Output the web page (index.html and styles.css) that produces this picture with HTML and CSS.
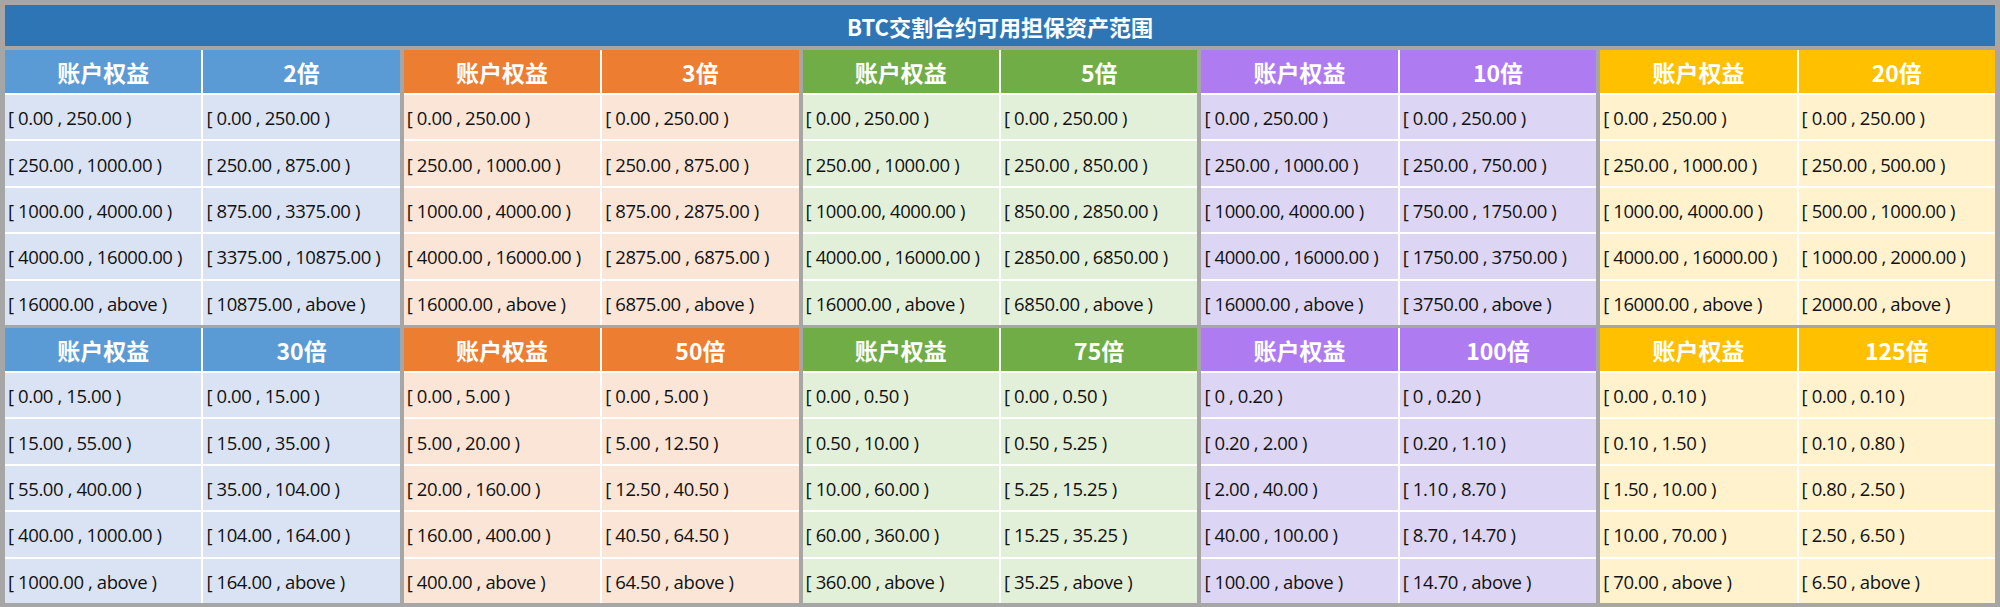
FILE: index.html
```html
<!DOCTYPE html>
<html lang="zh-CN">
<head>
<meta charset="utf-8">
<title>BTC交割合约可用担保资产范围</title>
<link rel="stylesheet" href="styles.css">
</head>
<body>
<div class="sheet">
  <div class="title">BTC交割合约可用担保资产范围</div>
  <div class="band">
    <div class="group blue">
      <div class="hd">账户权益</div><div class="hd">2倍</div>
      <div class="cell">[ 0.00 , 250.00 )</div><div class="cell">[ 0.00 , 250.00 )</div>
      <div class="cell">[ 250.00 , 1000.00 )</div><div class="cell">[ 250.00 , 875.00 )</div>
      <div class="cell">[ 1000.00 , 4000.00 )</div><div class="cell">[ 875.00 , 3375.00 )</div>
      <div class="cell">[ 4000.00 , 16000.00 )</div><div class="cell">[ 3375.00 , 10875.00 )</div>
      <div class="cell">[ 16000.00 , above )</div><div class="cell">[ 10875.00 , above )</div>
    </div>
    <div class="group orange">
      <div class="hd">账户权益</div><div class="hd">3倍</div>
      <div class="cell">[ 0.00 , 250.00 )</div><div class="cell">[ 0.00 , 250.00 )</div>
      <div class="cell">[ 250.00 , 1000.00 )</div><div class="cell">[ 250.00 , 875.00 )</div>
      <div class="cell">[ 1000.00 , 4000.00 )</div><div class="cell">[ 875.00 , 2875.00 )</div>
      <div class="cell">[ 4000.00 , 16000.00 )</div><div class="cell">[ 2875.00 , 6875.00 )</div>
      <div class="cell">[ 16000.00 , above )</div><div class="cell">[ 6875.00 , above )</div>
    </div>
    <div class="group green">
      <div class="hd">账户权益</div><div class="hd">5倍</div>
      <div class="cell">[ 0.00 , 250.00 )</div><div class="cell">[ 0.00 , 250.00 )</div>
      <div class="cell">[ 250.00 , 1000.00 )</div><div class="cell">[ 250.00 , 850.00 )</div>
      <div class="cell">[ 1000.00, 4000.00 )</div><div class="cell">[ 850.00 , 2850.00 )</div>
      <div class="cell">[ 4000.00 , 16000.00 )</div><div class="cell">[ 2850.00 , 6850.00 )</div>
      <div class="cell">[ 16000.00 , above )</div><div class="cell">[ 6850.00 , above )</div>
    </div>
    <div class="group purple">
      <div class="hd">账户权益</div><div class="hd">10倍</div>
      <div class="cell">[ 0.00 , 250.00 )</div><div class="cell">[ 0.00 , 250.00 )</div>
      <div class="cell">[ 250.00 , 1000.00 )</div><div class="cell">[ 250.00 , 750.00 )</div>
      <div class="cell">[ 1000.00, 4000.00 )</div><div class="cell">[ 750.00 , 1750.00 )</div>
      <div class="cell">[ 4000.00 , 16000.00 )</div><div class="cell">[ 1750.00 , 3750.00 )</div>
      <div class="cell">[ 16000.00 , above )</div><div class="cell">[ 3750.00 , above )</div>
    </div>
    <div class="group yellow">
      <div class="hd">账户权益</div><div class="hd">20倍</div>
      <div class="cell">[ 0.00 , 250.00 )</div><div class="cell">[ 0.00 , 250.00 )</div>
      <div class="cell">[ 250.00 , 1000.00 )</div><div class="cell">[ 250.00 , 500.00 )</div>
      <div class="cell">[ 1000.00, 4000.00 )</div><div class="cell">[ 500.00 , 1000.00 )</div>
      <div class="cell">[ 4000.00 , 16000.00 )</div><div class="cell">[ 1000.00 , 2000.00 )</div>
      <div class="cell">[ 16000.00 , above )</div><div class="cell">[ 2000.00 , above )</div>
    </div>
  </div>
  <div class="band band2">
    <div class="group blue">
      <div class="hd">账户权益</div><div class="hd">30倍</div>
      <div class="cell">[ 0.00 , 15.00 )</div><div class="cell">[ 0.00 , 15.00 )</div>
      <div class="cell">[ 15.00 , 55.00 )</div><div class="cell">[ 15.00 , 35.00 )</div>
      <div class="cell">[ 55.00 , 400.00 )</div><div class="cell">[ 35.00 , 104.00 )</div>
      <div class="cell">[ 400.00 , 1000.00 )</div><div class="cell">[ 104.00 , 164.00 )</div>
      <div class="cell">[ 1000.00 , above )</div><div class="cell">[ 164.00 , above )</div>
    </div>
    <div class="group orange">
      <div class="hd">账户权益</div><div class="hd">50倍</div>
      <div class="cell">[ 0.00 , 5.00 )</div><div class="cell">[ 0.00 , 5.00 )</div>
      <div class="cell">[ 5.00 , 20.00 )</div><div class="cell">[ 5.00 , 12.50 )</div>
      <div class="cell">[ 20.00 , 160.00 )</div><div class="cell">[ 12.50 , 40.50 )</div>
      <div class="cell">[ 160.00 , 400.00 )</div><div class="cell">[ 40.50 , 64.50 )</div>
      <div class="cell">[ 400.00 , above )</div><div class="cell">[ 64.50 , above )</div>
    </div>
    <div class="group green">
      <div class="hd">账户权益</div><div class="hd">75倍</div>
      <div class="cell">[ 0.00 , 0.50 )</div><div class="cell">[ 0.00 , 0.50 )</div>
      <div class="cell">[ 0.50 , 10.00 )</div><div class="cell">[ 0.50 , 5.25 )</div>
      <div class="cell">[ 10.00 , 60.00 )</div><div class="cell">[ 5.25 , 15.25 )</div>
      <div class="cell">[ 60.00 , 360.00 )</div><div class="cell">[ 15.25 , 35.25 )</div>
      <div class="cell">[ 360.00 , above )</div><div class="cell">[ 35.25 , above )</div>
    </div>
    <div class="group purple">
      <div class="hd">账户权益</div><div class="hd">100倍</div>
      <div class="cell">[ 0 , 0.20 )</div><div class="cell">[ 0 , 0.20 )</div>
      <div class="cell">[ 0.20 , 2.00 )</div><div class="cell">[ 0.20 , 1.10 )</div>
      <div class="cell">[ 2.00 , 40.00 )</div><div class="cell">[ 1.10 , 8.70 )</div>
      <div class="cell">[ 40.00 , 100.00 )</div><div class="cell">[ 8.70 , 14.70 )</div>
      <div class="cell">[ 100.00 , above )</div><div class="cell">[ 14.70 , above )</div>
    </div>
    <div class="group yellow">
      <div class="hd">账户权益</div><div class="hd">125倍</div>
      <div class="cell">[ 0.00 , 0.10 )</div><div class="cell">[ 0.00 , 0.10 )</div>
      <div class="cell">[ 0.10 , 1.50 )</div><div class="cell">[ 0.10 , 0.80 )</div>
      <div class="cell">[ 1.50 , 10.00 )</div><div class="cell">[ 0.80 , 2.50 )</div>
      <div class="cell">[ 10.00 , 70.00 )</div><div class="cell">[ 2.50 , 6.50 )</div>
      <div class="cell">[ 70.00 , above )</div><div class="cell">[ 6.50 , above )</div>
    </div>
  </div>
</div>
</body>
</html>
```

FILE: styles.css
```css
html, body {
  margin: 0;
  padding: 0;
  background: #a6a6a6;
}
.sheet {
  width: 2000px;
  height: 607px;
  box-sizing: border-box;
  padding: 5px 5px 4px 5px;
  display: flex;
  flex-direction: column;
  overflow: hidden;
}
.title {
  height: 41px;
  flex: none;
  background: #2e75b6;
  color: #fff;
  font-family: "Noto Sans CJK SC", sans-serif;
  font-weight: 700;
  font-size: 22px;
  display: flex;
  align-items: center;
  justify-content: center;
  margin-bottom: 4px;
}
.band {
  display: grid;
  grid-template-columns: repeat(5, minmax(0, 1fr));
  column-gap: 4px;
  height: 275px;
  flex: none;
}
.band2 {
  margin-top: 3px;
}
.group {
  display: grid;
  grid-template-columns: minmax(0, 1fr) minmax(0, 1fr);
  grid-template-rows: 43px repeat(5, minmax(0, 1fr));
  gap: 2px;
  background: #ffffff;
  min-width: 0;
}
.hd {
  display: flex;
  align-items: center;
  justify-content: center;
  color: #fff;
  font-family: "Noto Sans CJK SC", sans-serif;
  font-weight: 700;
  font-size: 23px;
}
.cell {
  display: flex;
  align-items: center;
  padding-left: 3px;
  padding-top: 1px;
  color: #111;
  font-family: "Open Sans", "Noto Sans", sans-serif;
  font-size: 18.5px;
  letter-spacing: -0.4px;
  white-space: nowrap;
  overflow: hidden;
  min-width: 0;
}
.blue .hd { background: #5b9bd5; }
.blue .cell { background: #dae3f3; }
.orange .hd { background: #ed7d31; }
.orange .cell { background: #fbe5d6; }
.green .hd { background: #70ad47; }
.green .cell { background: #e2f0d9; }
.purple .hd { background: #ae7cf0; }
.purple .cell { background: #dcd5f3; }
.yellow .hd { background: #ffc000; }
.yellow .cell { background: #fff2cc; }
```
